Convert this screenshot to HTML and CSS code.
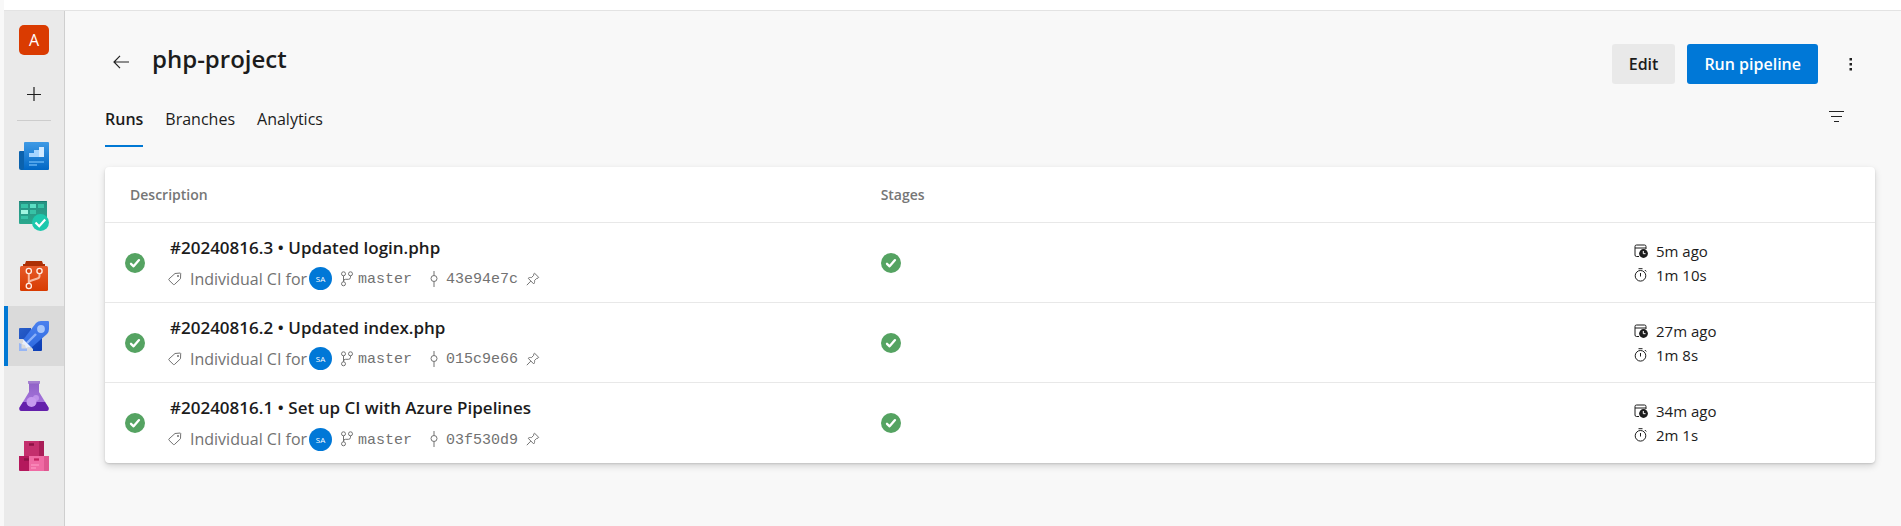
FILE: index.html
```html
<!DOCTYPE html>
<html lang="en">
<head>
<meta charset="utf-8">
<meta name="viewport" content="width=device-width, initial-scale=1">
<title>php-project - Pipelines</title>
<link rel="stylesheet" href="styles.css">
</head>
<body>
<svg class="sprite" aria-hidden="true">
  <defs>
    <symbol id="check" viewBox="0 0 20 20"><circle cx="10" cy="10" r="10" fill="#55a362"/><path d="M6 10.800l2.600 2.500 5.400-6.200" fill="none" stroke="#fff" stroke-width="2.300" stroke-linecap="round" stroke-linejoin="round"/></symbol>
    <symbol id="tag" viewBox="0 0 14 14"><path d="M7 1.500L12.300 1l.4.4-.2 5.300-5.900 5.700a1 1 0 0 1-1.300 0L1 8.200a1 1 0 0 1 0-1.300z" fill="none" stroke="currentColor"/><circle cx="10" cy="4" r="1" fill="currentColor"/></symbol>
    <symbol id="branch" viewBox="0 0 14 16"><g fill="none" stroke="currentColor"><circle cx="3.500" cy="2.800" r="2"/><circle cx="10.500" cy="2.800" r="2"/><circle cx="3.500" cy="12.800" r="2"/><path d="M3.500 4.800v6M10.500 4.800v1.500q0 2-2 2h-3q-2 0-2 2"/></g></symbol>
    <symbol id="commit" viewBox="0 0 8 16"><path d="M4 0v4.500M4 10.500V16" stroke="currentColor"/><circle cx="4" cy="7.500" r="3" fill="none" stroke="currentColor"/></symbol>
    <symbol id="pin" viewBox="0 0 14 14"><path d="M8.500 1.200L12.800 5.400l-.8.8-1.200.1-2.300 2.300c.3 1.600 0 2.500-.8 3.300L2.200 6.300c.9-.8 1.900-1 3.300-.7L7.700 3.300l.1-1.400zM4.800 9.100L.8 13.200" fill="none" stroke="currentColor"/></symbol>
    <symbol id="date" viewBox="0 0 14 14"><path d="M5 12.500H2.500a1.500 1.500 0 0 1-1.500-1.500V2.500A1.500 1.500 0 0 1 2.500 1h8A1.500 1.500 0 0 1 12 2.500V5M1 4h11" fill="none" stroke="currentColor"/><circle cx="9.500" cy="9.500" r="4.400" fill="currentColor"/><path d="M9.300 7v2.700h2.200" fill="none" stroke="#fff"/></symbol>
    <symbol id="timer" viewBox="0 0 14 14"><circle cx="6.500" cy="7.800" r="5.300" fill="none" stroke="currentColor"/><path d="M4.500.7h4M6.500 5v3.500M10.800 2l1.500 1.500" fill="none" stroke="currentColor"/></symbol>
  </defs>
</svg>
<div class="app">
  <header class="topbar"></header>
  <nav class="rail" aria-label="Project">
    <a class="rail-item" href="#" aria-label="Project home"><span class="project-tile">A</span></a>
    <button class="rail-item add" type="button" aria-label="Add">
      <svg width="14" height="14" viewBox="0 0 14 14"><path d="M7 0v14M0 7.500h14" stroke="#1f1f1f" stroke-width="1.200"/></svg>
    </button>
    <hr class="rail-rule">
    <a class="rail-item" href="#" aria-label="Overview">
      <svg width="30" height="30" viewBox="0 0 30 30"><defs><linearGradient id="g1" x2="0" y2="1"><stop stop-color="#3f9ae5"/><stop offset="1" stop-color="#0067c5"/></linearGradient></defs><path d="M0 11q0-1 1-1h5v19H2q-2 0-2-2z" fill="#0b62ad"/><path d="M5 2q0-1 1-1h23q1 0 1 1v26q0 1-1 1H3q2 0 2-2z" fill="url(#g1)"/><path d="M10 12h5v-3h5V6h5v10H10z" fill="#a6d5ff"/><path d="M20 6h5v10h-5z" fill="#d3eaff"/><path d="M10 21h15M10 24h8" stroke="#62b1f2" stroke-width="1.500"/></svg>
    </a>
    <a class="rail-item" href="#" aria-label="Boards">
      <svg width="30" height="30" viewBox="0 0 30 30"><defs><linearGradient id="g2" x2="0" y2="1"><stop stop-color="#279183"/><stop offset="1" stop-color="#2aa88d"/></linearGradient></defs><rect width="28" height="23" rx="1" fill="url(#g2)"/><path d="M0 1q0-1 1-1h26q1 0 1 1z" fill="#177d70"/><path d="M2 3h7v4H2zM19 3h6v4h-6zM11 9h6v4h-6zM2 15h7v3H2z" fill="#37c2a6"/><path d="M11 3h6v4h-6z" fill="#5cdfc5"/><path d="M2 9h7v4H2z" fill="#9ff5e0"/><circle cx="21.500" cy="21.500" r="8.500" fill="#1dc8ad"/><path d="M16.500 21.500l3.700 3.700 6-6.700" fill="none" stroke="#fff" stroke-width="2.200"/></svg>
    </a>
    <a class="rail-item" href="#" aria-label="Repos">
      <svg width="30" height="30" viewBox="0 0 30 30"><defs><linearGradient id="g3" x2="0" y2="1"><stop stop-color="#e65a2a"/><stop offset="1" stop-color="#d83b01"/></linearGradient></defs><path d="M7 0h16l1 3h2v3H4V3h2z" fill="#ad2f05"/><rect x="1" y="5" width="28" height="25" rx="1.500" fill="url(#g3)"/><g fill="none" stroke="#f8b9a0" stroke-width="2"><path d="M9.800 13v9" /><path d="M20.500 13v2q0 2-2 2.500l-6 2q-2.500.8-2.700 3"/></g><g fill="#d54414" stroke="#fff0e8" stroke-width="1.300"><circle cx="9.800" cy="10" r="2.600"/><circle cx="20.500" cy="10" r="2.600"/><circle cx="9.800" cy="25" r="2.600"/></g></svg>
    </a>
    <a class="rail-item active" href="#" aria-label="Pipelines" aria-current="page">
      <svg width="30" height="30" viewBox="0 0 30 30"><defs><linearGradient id="g4" x2="1" y2="1"><stop stop-color="#2a5fc9"/><stop offset="1" stop-color="#0a3cb5"/></linearGradient><linearGradient id="g6" x2="0" y2="1"><stop stop-color="#4a80ee"/><stop offset="1" stop-color="#2f6be0"/></linearGradient></defs><path d="M0 8q0-1 1-1h11v13H0zM12 17h11v12q0 1-1 1H10z" fill="url(#g4)"/><path d="M0 18h4l10 10v2H0z" fill="#dadada"/><path d="M4 19L17 2q2-2 5-2h7q1 0 1 1v7q0 3-2 5L12 27z" fill="url(#g6)"/><circle cx="22" cy="8" r="3.900" fill="#a7c6fb"/><path d="M8 22l9-9" stroke="#8bb0f8" stroke-width="2.400"/><path d="M4 18l9 9-3.500-1-2.500 1-1-3-3-1 1-2z" fill="#e8effd"/><path d="M0 22l2.500 1v4.500H8V30H0z" fill="#97b6f5"/></svg>
    </a>
    <a class="rail-item" href="#" aria-label="Test Plans">
      <svg width="30" height="30" viewBox="0 0 30 30"><defs><linearGradient id="g5" x2="0" y2="1"><stop stop-color="#8e61c5"/><stop offset="1" stop-color="#ad79e5"/></linearGradient></defs><path d="M9 0h12v2.500h-1V11l9.500 15.500q.8 3.500-2 3.500h-25q-2.800 0-2-3.500L10 11V2.500H9z" fill="url(#g5)"/><path d="M4 21h22l3.500 5.500q.8 3.500-2 3.500h-25q-2.800 0-2-3.500z" fill="#6420ab"/><circle cx="12.500" cy="21" r="5" fill="#c69aef"/><circle cx="17" cy="17" r="3" fill="#c69aef" opacity=".8"/><path d="M9 0h12v2.500H9z" fill="#a580d0"/></svg>
    </a>
    <a class="rail-item" href="#" aria-label="Artifacts">
      <svg width="30" height="30" viewBox="0 0 30 30"><path d="M5 0h20v15H5z" fill="#c42f6d"/><path d="M20 0h5v15h-5z" fill="#a91e58"/><path d="M0 15h10v15H1q-1 0-1-1z" fill="#b4185c"/><path d="M10 15h20v14q0 1-1 1H10z" fill="#f06ba4"/><path d="M25 15h5v14q0 1-1 1h-4z" fill="#df5790"/><path d="M10 3.500h5M5 18.500h5" stroke="#8d1245" stroke-width="2.300"/><path d="M15 18.500h5" stroke="#c42360" stroke-width="2.300"/><path d="M12 24h8M12 27h5" stroke="#ff9fc8" stroke-width="1.200"/></svg>
    </a>
  </nav>
  <main class="main">
    <div class="page-head">
      <a class="back" href="#" aria-label="Back"><svg width="16" height="14" viewBox="0 0 16 14"><path d="M7 .8L1 7l6 6.200M1 7h15" fill="none" stroke="#222" stroke-width="1.200"/></svg></a>
      <h1>php-project</h1>
      <div class="actions">
        <button class="btn" type="button">Edit</button>
        <button class="btn primary" type="button">Run pipeline</button>
        <button class="icon-btn" type="button" aria-label="More actions"><svg width="4" height="14" viewBox="0 0 4 14"><path d="M.5 1h2.500v2.500H.5zM.5 6h2.500v2.500H.5zM.5 11h2.500v2.500H.5z" fill="#222"/></svg></button>
      </div>
    </div>
    <div class="tabs">
      <a class="tab selected" href="#" aria-current="page">Runs</a>
      <a class="tab" href="#">Branches</a>
      <a class="tab" href="#">Analytics</a>
      <button class="filter" type="button" aria-label="Filter"><svg width="16" height="12" viewBox="0 0 16 12"><path d="M0 .5h15M2 5.500h11M5 10.500h5" stroke="#222" stroke-width="1.200"/></svg></button>
    </div>
    <table class="runs">
      <colgroup><col class="col-desc"><col><col class="col-time"></colgroup>
      <thead><tr><th scope="col" class="th-desc">Description</th><th scope="col">Stages</th><th></th></tr></thead>
      <tbody>
        <tr>
          <td><div class="run"><svg class="status"><use href="#check"/></svg><div class="run-text">
            <a class="run-title" href="#">#20240816.3 • Updated login.php</a>
            <div class="run-meta"><svg class="ico-tag"><use href="#tag"/></svg><span>Individual CI for</span><span class="avatar">SA</span><svg class="ico-branch"><use href="#branch"/></svg><span class="mono branch-name">master</span><svg class="ico-commit"><use href="#commit"/></svg><span class="mono">43e94e7c</span><svg class="ico-pin"><use href="#pin"/></svg></div>
          </div></div></td>
          <td><svg class="status"><use href="#check"/></svg></td>
          <td><div class="time"><svg><use href="#date"/></svg>5m ago</div><div class="time"><svg><use href="#timer"/></svg>1m 10s</div></td>
        </tr>
        <tr>
          <td><div class="run"><svg class="status"><use href="#check"/></svg><div class="run-text">
            <a class="run-title" href="#">#20240816.2 • Updated index.php</a>
            <div class="run-meta"><svg class="ico-tag"><use href="#tag"/></svg><span>Individual CI for</span><span class="avatar">SA</span><svg class="ico-branch"><use href="#branch"/></svg><span class="mono branch-name">master</span><svg class="ico-commit"><use href="#commit"/></svg><span class="mono">015c9e66</span><svg class="ico-pin"><use href="#pin"/></svg></div>
          </div></div></td>
          <td><svg class="status"><use href="#check"/></svg></td>
          <td><div class="time"><svg><use href="#date"/></svg>27m ago</div><div class="time"><svg><use href="#timer"/></svg>1m 8s</div></td>
        </tr>
        <tr>
          <td><div class="run"><svg class="status"><use href="#check"/></svg><div class="run-text">
            <a class="run-title" href="#">#20240816.1 • Set up CI with Azure Pipelines</a>
            <div class="run-meta"><svg class="ico-tag"><use href="#tag"/></svg><span>Individual CI for</span><span class="avatar">SA</span><svg class="ico-branch"><use href="#branch"/></svg><span class="mono branch-name">master</span><svg class="ico-commit"><use href="#commit"/></svg><span class="mono">03f530d9</span><svg class="ico-pin"><use href="#pin"/></svg></div>
          </div></div></td>
          <td><svg class="status"><use href="#check"/></svg></td>
          <td><div class="time"><svg><use href="#date"/></svg>34m ago</div><div class="time"><svg><use href="#timer"/></svg>2m 1s</div></td>
        </tr>
      </tbody>
    </table>
  </main>
</div>
</body>
</html>
```
FILE: styles.css
```css
* { box-sizing: border-box; }
body {
  margin: 0;
  background: #f8f8f8;
  color: #1c1c1c;
  font-family: "Segoe UI", "Open Sans", "Noto Sans", sans-serif;
  font-size: 16px;
}
a { color: inherit; text-decoration: none; }
button { border: 0; padding: 0; background: none; font: inherit; color: inherit; }
svg { display: block; flex: none; }
.sprite { position: absolute; width: 0; height: 0; }

.app {
  display: grid;
  grid-template: 11px 1fr / 61px 1fr;
  min-height: 100vh;
  padding-left: 4px;
}
.topbar { grid-column: 1 / -1; background: #fff; border-bottom: 1px solid #e3e3e3; }

.rail { background: #eaeaea; border-right: 1px solid #cfcfcf; }
.rail-item { display: flex; align-items: center; justify-content: center; width: 100%; height: 60px; padding: 0 12px; }
.rail-item:first-child { height: 58px; }
.rail-item.add { height: 50px; }
.rail-item.active { background: #dadada; border-left: 4px solid #0078d4; padding-left: 8px; }
.project-tile { width: 30px; height: 30px; border-radius: 5px; background: #da3b01; color: #fff; line-height: 30px; text-align: center; }
.rail-rule { width: 34px; height: 1px; margin: 1px auto 5px; border: 0; background: #cdcdcd; }

.main { padding: 33px 26px 40px 40px; }
.page-head { display: flex; align-items: center; height: 40px; }
.back { margin: 0 23px 0 8px; padding-bottom: 4px; }
h1 { margin: 0; padding-bottom: 10px; font-size: 24px; line-height: 30px; font-weight: 600; }
.actions { display: flex; gap: 12px; margin-left: auto; margin-right: 3px; }
.btn { height: 40px; padding: 0 17px; border-radius: 3px; background: #e9e9e9; font-weight: 600; }
.btn.primary { background: #0078d7; color: #fff; }
.icon-btn { display: flex; align-items: center; justify-content: center; width: 42px; }

.tabs { display: flex; gap: 22px; height: 63px; padding-top: 15px; }
.tab { height: 48px; line-height: 40px; }
.tab.selected { font-weight: 600; border-bottom: 2px solid #0078d4; }
.filter { height: 24px; margin: 6px 30px 0 auto; }

.runs {
  width: 100%;
  margin-top: 20px;
  table-layout: fixed;
  border-collapse: separate;
  border-spacing: 0;
  border-radius: 4px;
  background: #fff;
  box-shadow: 0 3px 7px rgba(0, 0, 0, .15), 0 1px 2px rgba(0, 0, 0, .12);
}
.col-desc { width: 43.2%; }
.col-time { width: 252px; }
th { height: 56px; padding: 0 11px; border-bottom: 1px solid #e8e8e8; color: #767676; font-size: 14px; font-weight: 600; text-align: left; }
.th-desc { padding-left: 25px; }
td { height: 80px; padding: 0 11px; border-bottom: 1px solid #e8e8e8; }
tr:last-child td { border-bottom: 0; }
.status { width: 20px; height: 20px; }
.run { display: flex; align-items: center; padding-left: 9px; }
.run-text { padding-left: 23px; }
.run-title { display: block; padding-left: 2px; line-height: 32px; font-size: 17px; font-weight: 600; }
.run-meta { display: flex; align-items: center; height: 30px; color: #727272; }
.ico-tag { width: 14px; height: 14px; margin-right: 8px; }
.avatar { width: 23px; height: 23px; margin: 0 8px 0 2px; border-radius: 50%; background: #0078d7; color: #fff; font-size: 8px; line-height: 23px; text-align: center; }
.ico-branch { width: 14px; height: 16px; margin-right: 4px; }
.mono { font-family: Consolas, "Liberation Mono", monospace; font-size: 15px; line-height: 20px; padding-top: 3px; }
.branch-name { margin-right: 18px; }
.ico-commit { width: 8px; height: 16px; margin-right: 8px; }
.ico-pin { width: 14px; height: 14px; margin-left: 8px; }
.time { display: flex; align-items: center; gap: 8px; height: 24px; font-size: 15px; }
.time svg { width: 14px; height: 14px; }
```
